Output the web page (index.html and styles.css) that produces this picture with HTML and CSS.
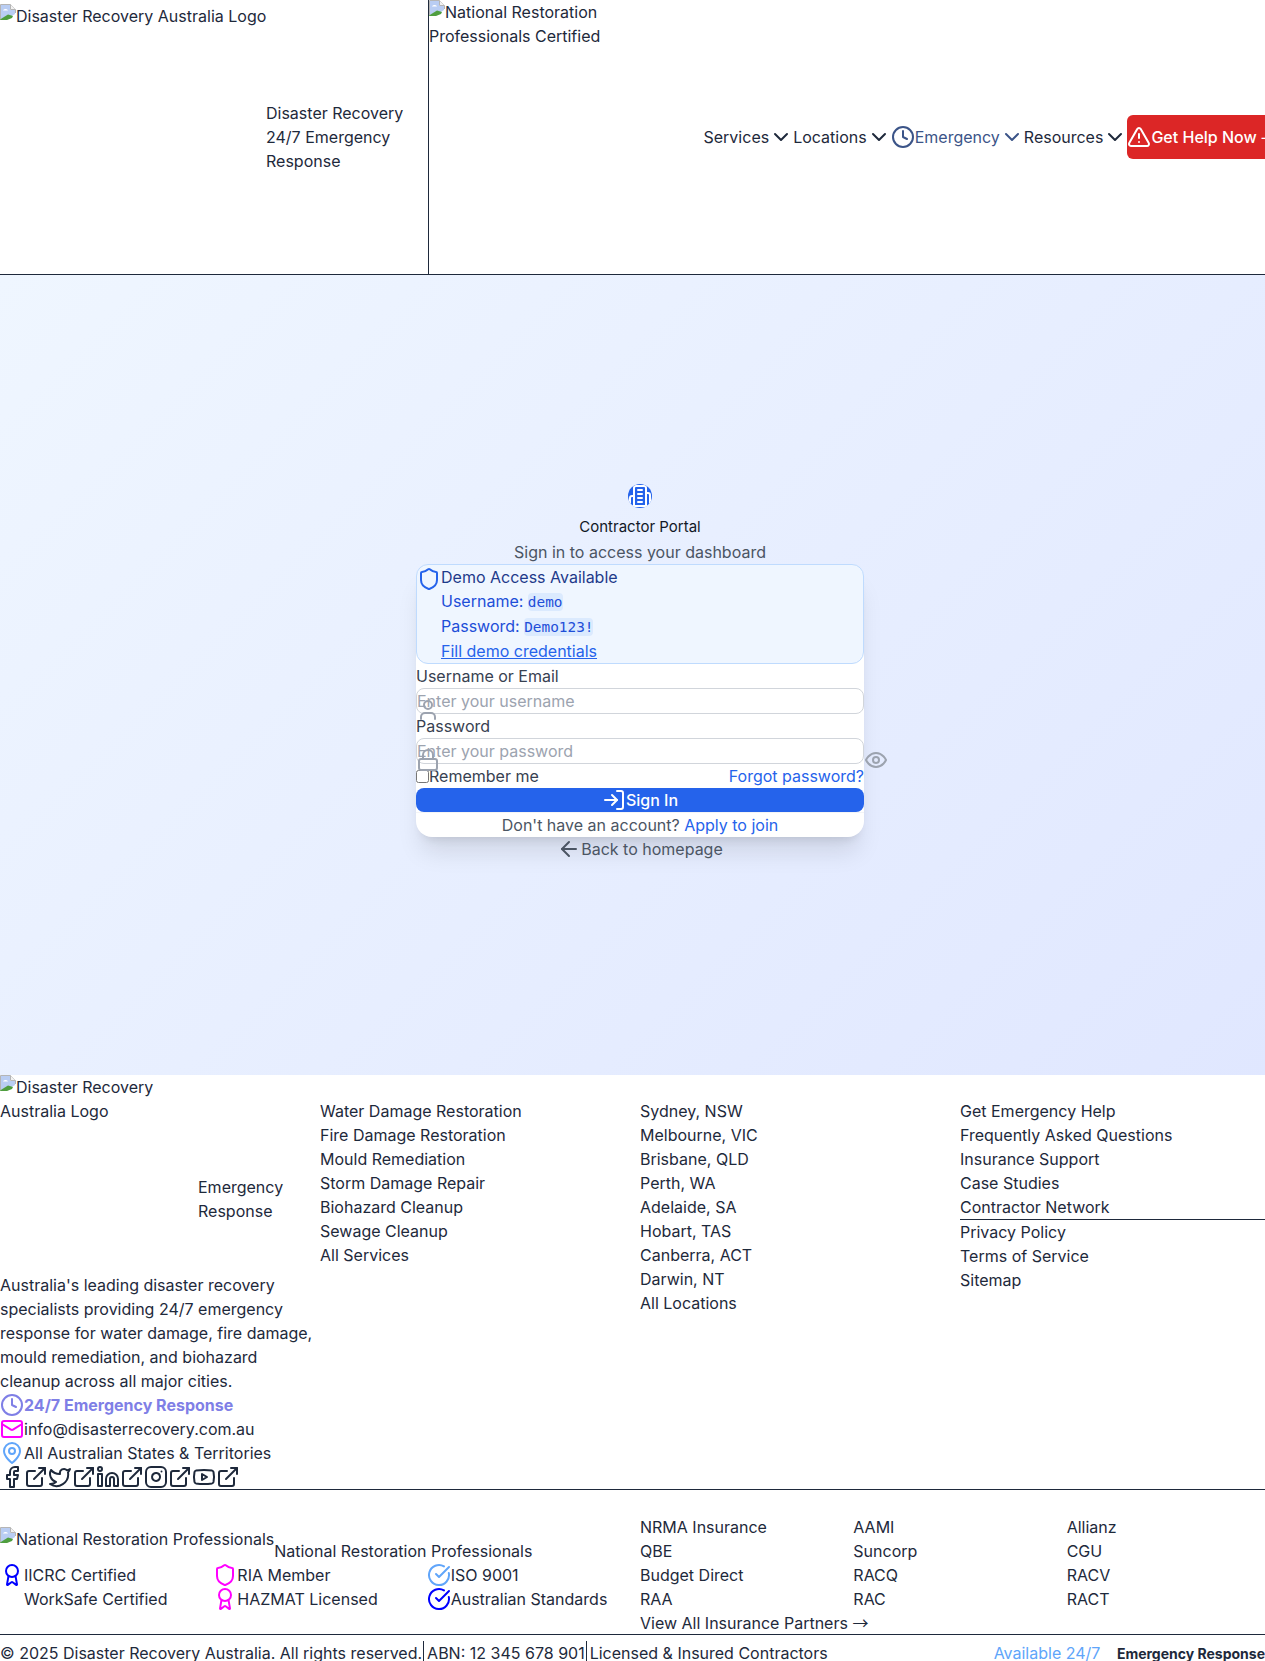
FILE: index.html
```html
<!DOCTYPE html>
<html lang="en">
<head>
    <meta charset="UTF-8">
    <meta name="viewport" content="width=device-width, initial-scale=1.0">
    <title>Contractor Portal - Disaster Recovery Australia</title>
    <link rel="stylesheet" href="styles.css">
</head>
<body>

<svg class="sprite" xmlns="http://www.w3.org/2000/svg">
    <symbol id="i-broken" viewBox="0 0 16 16">
        <path d="M0.5 15V0.5H10.5L15.5 5.5V9" fill="#fff" stroke="#b5b5b5"/>
        <path d="M10.5 0.5V5.5H15.5" fill="#f2f2f2" stroke="#b5b5b5"/>
        <path d="M1 1H10V6H15V10L11 12.5L1 15Z" fill="#b9cdf3"/>
        <path d="M3 6.5C4 4.5 7 4.5 8 6.5Z" fill="#fff"/>
        <path d="M0 15.5L8 10.5L13 12L12 14L7 16H0Z" fill="#4f9e3f"/>
    </symbol>
    <symbol id="i-chevron" viewBox="0 0 24 24"><path d="m6 9 6 6 6-6"/></symbol>
    <symbol id="i-clock" viewBox="0 0 24 24"><circle cx="12" cy="12" r="10"/><path d="M12 6v6l4 2"/></symbol>
    <symbol id="i-alert" viewBox="0 0 24 24"><path d="m21.73 18-8-14a2 2 0 0 0-3.48 0l-8 14A2 2 0 0 0 4 21h16a2 2 0 0 0 1.73-3"/><path d="M12 9v4"/><path d="M12 17h.01"/></symbol>
    <symbol id="i-shield" viewBox="0 0 24 24"><path d="M20 13c0 5-3.5 7.5-7.66 8.95a1 1 0 0 1-.67-.01C7.5 20.5 4 18 4 13V6a1 1 0 0 1 1-1c2 0 4.5-1.2 6.24-2.72a1.17 1.17 0 0 1 1.52 0C14.51 3.81 17 5 19 5a1 1 0 0 1 1 1z"/></symbol>
    <symbol id="i-user" viewBox="0 0 24 24"><path d="M19 21v-2a4 4 0 0 0-4-4H9a4 4 0 0 0-4 4v2"/><circle cx="12" cy="7" r="4"/></symbol>
    <symbol id="i-lock" viewBox="0 0 24 24"><rect x="3" y="11" width="18" height="11" rx="2"/><path d="M7 11V7a5 5 0 0 1 10 0v4"/></symbol>
    <symbol id="i-eye" viewBox="0 0 24 24"><path d="M2 12s3-7 10-7 10 7 10 7-3 7-10 7-10-7-10-7Z"/><circle cx="12" cy="12" r="3"/></symbol>
    <symbol id="i-login" viewBox="0 0 24 24"><path d="M15 3h4a2 2 0 0 1 2 2v14a2 2 0 0 1-2 2h-4"/><path d="m10 17 5-5-5-5"/><path d="M15 12H3"/></symbol>
    <symbol id="i-back" viewBox="0 0 24 24"><path d="m12 19-7-7 7-7"/><path d="M19 12H5"/></symbol>
    <symbol id="i-mail" viewBox="0 0 24 24"><rect x="2" y="4" width="20" height="16" rx="2"/><path d="m22 7-8.97 5.7a1.94 1.94 0 0 1-2.06 0L2 7"/></symbol>
    <symbol id="i-pin" viewBox="0 0 24 24"><path d="M20 10c0 6-8 12-8 12s-8-6-8-12a8 8 0 0 1 16 0Z"/><circle cx="12" cy="10" r="3"/></symbol>
    <symbol id="i-ext" viewBox="0 0 24 24"><path d="M15 3h6v6"/><path d="M10 14 21 3"/><path d="M18 13v6a2 2 0 0 1-2 2H5a2 2 0 0 1-2-2V8a2 2 0 0 1 2-2h6"/></symbol>
    <symbol id="i-facebook" viewBox="0 0 24 24"><path d="M18 2h-3a5 5 0 0 0-5 5v3H7v4h3v8h4v-8h3l1-4h-4V7a1 1 0 0 1 1-1h3z"/></symbol>
    <symbol id="i-twitter" viewBox="0 0 24 24"><path d="M22 4s-.7 2.1-2 3.4c1.6 10-9.4 17.3-18 11.6 2.2.1 4.4-.6 6-2C3 15.5.5 9.6 3 5c2.2 2.6 5.6 4.1 9 4-.9-4.2 4-6.6 7-3.8 1.1 0 3-1.2 3-1.2z"/></symbol>
    <symbol id="i-linkedin" viewBox="0 0 24 24"><path d="M16 8a6 6 0 0 1 6 6v7h-4v-7a2 2 0 0 0-2-2 2 2 0 0 0-2 2v7h-4v-7a6 6 0 0 1 6-6z"/><rect x="2" y="9" width="4" height="12"/><circle cx="4" cy="4" r="2"/></symbol>
    <symbol id="i-instagram" viewBox="0 0 24 24"><rect x="2" y="2" width="20" height="20" rx="5"/><path d="M16 11.37A4 4 0 1 1 12.63 8 4 4 0 0 1 16 11.37z"/><path d="M17.5 6.5h.01"/></symbol>
    <symbol id="i-youtube" viewBox="0 0 24 24"><path d="M2.5 17a24.12 24.12 0 0 1 0-10 2 2 0 0 1 1.4-1.4 49.56 49.56 0 0 1 16.2 0A2 2 0 0 1 21.5 7a24.12 24.12 0 0 1 0 10 2 2 0 0 1-1.4 1.4 49.55 49.55 0 0 1-16.2 0A2 2 0 0 1 2.5 17"/><path d="m10 15 5-3-5-3z"/></symbol>
    <symbol id="i-award" viewBox="0 0 24 24"><path d="m15.477 12.89 1.515 8.526a.5.5 0 0 1-.81.47l-3.58-2.687a1 1 0 0 0-1.197 0l-3.586 2.686a.5.5 0 0 1-.81-.469l1.514-8.526"/><circle cx="12" cy="8" r="6"/></symbol>
    <symbol id="i-check" viewBox="0 0 24 24"><path d="M21.801 10A10 10 0 1 1 17 3.335"/><path d="m9 11 3 3L22 4"/></symbol>
    <symbol id="i-building" viewBox="0 0 24 24"><path d="M6 22V4a2 2 0 0 1 2-2h8a2 2 0 0 1 2 2v18Z"/><path d="M6 12H4a2 2 0 0 0-2 2v6a2 2 0 0 0 2 2h2"/><path d="M18 9h2a2 2 0 0 1 2 2v9a2 2 0 0 1-2 2h-2"/><path d="M10 6h4"/><path d="M10 10h4"/><path d="M10 14h4"/><path d="M10 18h4"/></symbol>
</svg>

<header class="site-header">
    <div class="brand">
        <a class="brand-logo"><svg class="broken"><use href="#i-broken"/></svg>Disaster Recovery Australia Logo</a>
        <div class="brand-text">
            <div>Disaster Recovery</div>
            <div>24/7 Emergency Response</div>
        </div>
    </div>
    <div class="certified"><svg class="broken"><use href="#i-broken"/></svg>National Restoration Professionals Certified</div>
    <nav class="main-nav">
        <a class="nav-link">Services<svg class="icon"><use href="#i-chevron"/></svg></a>
        <a class="nav-link">Locations<svg class="icon"><use href="#i-chevron"/></svg></a>
        <a class="nav-link nav-emergency"><svg class="icon"><use href="#i-clock"/></svg>Emergency<svg class="icon"><use href="#i-chevron"/></svg></a>
        <a class="nav-link">Resources<svg class="icon"><use href="#i-chevron"/></svg></a>
        <a class="help-btn"><svg class="icon"><use href="#i-alert"/></svg>Get Help Now <span class="arrow">→</span></a>
    </nav>
</header>

<main class="login-page">
    <div class="login-wrap">
        <div class="login-head">
            <div class="portal-badge"><svg class="icon"><use href="#i-building"/></svg></div>
            <h1>Contractor Portal</h1>
            <p>Sign in to access your dashboard</p>
        </div>
        <div class="login-card">
            <div class="demo-box">
                <svg class="icon demo-icon"><use href="#i-shield"/></svg>
                <div class="demo-text">
                    <div class="demo-title">Demo Access Available</div>
                    <div>Username: <code>demo</code></div>
                    <div>Password: <code>Demo123!</code></div>
                    <a class="demo-fill">Fill demo credentials</a>
                </div>
            </div>
            <form id="loginForm">
                <label for="username">Username or Email</label>
                <div class="field">
                    <svg class="icon field-icon"><use href="#i-user"/></svg>
                    <input type="text" id="username" placeholder="Enter your username">
                </div>
                <label for="password">Password</label>
                <div class="field">
                    <svg class="icon field-icon"><use href="#i-lock"/></svg>
                    <input type="password" id="password" placeholder="Enter your password">
                    <svg class="icon field-eye"><use href="#i-eye"/></svg>
                </div>
                <div class="form-row">
                    <label class="remember"><input type="checkbox">Remember me</label>
                    <a class="link">Forgot password?</a>
                </div>
                <button type="submit" class="signin-btn"><svg class="icon"><use href="#i-login"/></svg>Sign In</button>
            </form>
            <div class="card-foot">Don't have an account? <a class="link">Apply to join</a></div>
        </div>
        <a class="back-link"><svg class="icon"><use href="#i-back"/></svg>Back to homepage</a>
    </div>
</main>

<footer class="site-footer">
    <div class="footer-grid">
        <div>
            <div class="footer-brand">
                <div class="footer-logo"><svg class="broken"><use href="#i-broken"/></svg>Disaster Recovery Australia Logo</div>
                <div class="footer-brand-text">Emergency Response</div>
            </div>
            <p>Australia's leading disaster recovery specialists providing 24/7 emergency response for water damage, fire damage, mould remediation, and biohazard cleanup across all major cities.</p>
            <div class="contact contact-strong"><svg class="icon"><use href="#i-clock"/></svg>24/7 Emergency Response</div>
            <div class="contact"><svg class="icon icon-pink"><use href="#i-mail"/></svg>info@disasterrecovery.com.au</div>
            <div class="contact"><svg class="icon icon-sky"><use href="#i-pin"/></svg>All Australian States &amp; Territories</div>
            <div class="socials">
                <svg class="icon"><use href="#i-facebook"/></svg><svg class="icon"><use href="#i-ext"/></svg>
                <svg class="icon"><use href="#i-twitter"/></svg><svg class="icon"><use href="#i-ext"/></svg>
                <svg class="icon"><use href="#i-linkedin"/></svg><svg class="icon"><use href="#i-ext"/></svg>
                <svg class="icon"><use href="#i-instagram"/></svg><svg class="icon"><use href="#i-ext"/></svg>
                <svg class="icon"><use href="#i-youtube"/></svg><svg class="icon"><use href="#i-ext"/></svg>
            </div>
        </div>
        <ul class="footer-list">
            <li>Water Damage Restoration</li>
            <li>Fire Damage Restoration</li>
            <li>Mould Remediation</li>
            <li>Storm Damage Repair</li>
            <li>Biohazard Cleanup</li>
            <li>Sewage Cleanup</li>
            <li>All Services</li>
        </ul>
        <ul class="footer-list">
            <li>Sydney, NSW</li>
            <li>Melbourne, VIC</li>
            <li>Brisbane, QLD</li>
            <li>Perth, WA</li>
            <li>Adelaide, SA</li>
            <li>Hobart, TAS</li>
            <li>Canberra, ACT</li>
            <li>Darwin, NT</li>
            <li>All Locations</li>
        </ul>
        <div class="footer-list">
            <ul class="support-list">
                <li>Get Emergency Help</li>
                <li>Frequently Asked Questions</li>
                <li>Insurance Support</li>
                <li>Case Studies</li>
                <li>Contractor Network</li>
            </ul>
            <ul>
                <li>Privacy Policy</li>
                <li>Terms of Service</li>
                <li>Sitemap</li>
            </ul>
        </div>
    </div>

    <div class="partners">
        <div class="partners-left">
            <div class="nrp">
                <div class="nrp-logo"><svg class="broken"><use href="#i-broken"/></svg>National Restoration Professionals</div>
                <div>National Restoration Professionals</div>
            </div>
            <div class="three-col">
                <div class="cert"><svg class="icon icon-blue"><use href="#i-award"/></svg>IICRC Certified</div>
                <div class="cert"><svg class="icon icon-pink"><use href="#i-shield"/></svg>RIA Member</div>
                <div class="cert"><svg class="icon icon-sky"><use href="#i-check"/></svg>ISO 9001</div>
                <div class="cert"><svg class="icon icon-white"><use href="#i-shield"/></svg>WorkSafe Certified</div>
                <div class="cert"><svg class="icon icon-pink"><use href="#i-award"/></svg>HAZMAT Licensed</div>
                <div class="cert"><svg class="icon icon-blue"><use href="#i-check"/></svg>Australian Standards</div>
            </div>
        </div>
        <div>
            <div class="three-col">
                <div>NRMA Insurance</div><div>AAMI</div><div>Allianz</div>
                <div>QBE</div><div>Suncorp</div><div>CGU</div>
                <div>Budget Direct</div><div>RACQ</div><div>RACV</div>
                <div>RAA</div><div>RAC</div><div>RACT</div>
            </div>
            <div>View All Insurance Partners <span class="arrow">→</span></div>
        </div>
    </div>

    <div class="legal">
        <div class="legal-left">
            <span>© 2025 Disaster Recovery Australia. All rights reserved.</span>
            <span class="legal-item">ABN: 12 345 678 901</span>
            <span class="legal-item">Licensed &amp; Insured Contractors</span>
        </div>
        <div class="legal-right">
            <span class="available">Available 24/7</span>
            <strong>Emergency Response</strong>
        </div>
    </div>
</footer>

</body>
</html>
```

FILE: styles.css
```css
* {
    box-sizing: border-box;
}
html {
    height: 1661px;
    overflow: hidden;
}
body {
    margin: 0;
    padding: 0;
    width: 1280px;
    font-family: Inter, "Liberation Sans", sans-serif;
    font-size: 16px;
    line-height: 24px;
    color: #1e293b;
    background-color: #fff;
}
ul {
    list-style: none;
    margin: 0;
    padding: 0;
}
p {
    margin: 0;
}
.sprite {
    display: none;
}
.icon {
    width: 24px;
    height: 24px;
    flex: none;
    fill: none;
    stroke: currentColor;
    stroke-width: 2;
    stroke-linecap: round;
    stroke-linejoin: round;
}
.broken {
    width: 16px;
    height: 16px;
    vertical-align: top;
}
.arrow {
    font-family: "Noto Sans CJK SC", sans-serif;
    line-height: 1;
}
.icon-pink { color: #ff00ff; }
.icon-sky { color: #60a5fa; }
.icon-blue { color: #0000ff; }
.icon-white { color: #fff; }

/* header */
.site-header {
    display: flex;
    align-items: center;
    height: 275px;
    border-bottom: 1px solid #1e293b;
}
.brand {
    display: flex;
    align-items: center;
    width: 429px;
    height: 274px;
    border-right: 1px solid #1e293b;
    flex: none;
}
.brand-logo {
    align-self: flex-start;
    margin-top: 4px;
    width: 266px;
    flex: none;
    white-space: nowrap;
}
.brand-text {
    width: 140px;
}
.certified {
    align-self: flex-start;
    width: 175px;
    flex: none;
}
.main-nav {
    display: flex;
    align-items: center;
    margin-left: 99.5px;
    flex: none;
}
.nav-link {
    display: flex;
    align-items: center;
}
.nav-emergency {
    color: #3b5488;
}
.help-btn {
    display: flex;
    align-items: center;
    height: 44px;
    background-color: #dc2626;
    color: #fff;
    border-radius: 6px;
    font-weight: 500;
    white-space: pre;
}

/* login */
.login-page {
    display: flex;
    align-items: center;
    justify-content: center;
    height: 800px;
    padding-bottom: 5px;
    background: linear-gradient(135deg, #eff6ff, #e0e7ff);
}
.login-wrap {
    width: 448px;
}
.login-head {
    text-align: center;
}
.portal-badge {
    display: flex;
    align-items: center;
    justify-content: center;
    width: 24px;
    height: 24px;
    margin: 0 auto 7px;
    border-radius: 50%;
    background-color: #2563eb;
    color: #fff;
    overflow: hidden;
}
.login-head h1 {
    margin: 0 0 1px;
    font-size: 15px;
    font-weight: 400;
    color: #111827;
}
.login-head p {
    color: #4b5563;
}
.login-card {
    background-color: #fff;
    border-radius: 16px;
    box-shadow: 0 20px 25px -5px rgba(0, 0, 0, 0.1), 0 8px 10px -6px rgba(0, 0, 0, 0.1);
}
.demo-box {
    display: flex;
    height: 100px;
    background-color: #eff6ff;
    border: 1px solid #bfdbfe;
    border-radius: 12px;
}
.demo-icon {
    color: #2563eb;
    margin-top: 2px;
}
.demo-text {
    color: #1d4ed8;
}
.demo-title {
    color: #1e3a8a;
}
.demo-text code {
    font-family: "DejaVu Sans Mono", monospace;
    font-size: 14.4px;
    padding: 1px 0;
    background-color: #dbeafe;
    border-radius: 4px;
}
.demo-fill {
    display: block;
    color: #2563eb;
    text-decoration: underline;
}
#loginForm label {
    display: block;
    color: #374151;
}
.field {
    position: relative;
}
.field input {
    display: block;
    width: 100%;
    height: 26px;
    padding: 0;
    font: inherit;
    background: transparent;
    border: 1px solid #d1d5db;
    border-radius: 8px;
}
.field input::placeholder {
    color: #9ca3af;
}
.field-icon {
    position: absolute;
    left: 0;
    top: 10px;
    color: #9ca3af;
}
.field-eye {
    position: absolute;
    left: 100%;
    top: 10px;
    color: #9ca3af;
}
.form-row {
    display: flex;
    justify-content: space-between;
    align-items: center;
}
#loginForm .remember {
    display: flex;
    align-items: center;
}
.remember input {
    width: 13px;
    height: 13px;
    margin: 0;
}
.link {
    color: #2563eb;
}
.signin-btn {
    display: flex;
    align-items: center;
    justify-content: center;
    width: 100%;
    height: 24px;
    padding: 0;
    font: inherit;
    font-weight: 500;
    color: #fff;
    background-color: #2563eb;
    border: none;
    border-radius: 8px;
}
.card-foot {
    text-align: center;
    color: #4b5563;
    border-top: 1px solid #f3f4f6;
}
.back-link {
    display: flex;
    align-items: center;
    justify-content: center;
    color: #4b5563;
}

/* footer */
.footer-grid {
    display: grid;
    grid-template-columns: repeat(4, 1fr);
    height: 415px;
    border-bottom: 1px solid #1e293b;
}
.footer-brand {
    display: flex;
    align-items: flex-end;
    height: 148px;
    margin-bottom: 50px;
}
.footer-logo {
    align-self: flex-start;
    width: 198px;
    flex: none;
}
.footer-brand-text {
    width: 90px;
}
.contact {
    display: flex;
    align-items: center;
}
.contact-strong {
    color: #7f7fe6;
    font-weight: 700;
}
.socials {
    display: flex;
}
.footer-list {
    padding-top: 24px;
}
.support-list {
    border-bottom: 1px solid #1e293b;
}
.partners {
    display: grid;
    grid-template-columns: 1fr 1fr;
    height: 145px;
    padding-top: 25px;
    border-bottom: 1px solid #1e293b;
}
.partners-left {
    padding-top: 12px;
}
.nrp {
    display: flex;
    align-items: flex-end;
    height: 36px;
}
.nrp-logo {
    align-self: flex-start;
    white-space: nowrap;
}
.three-col {
    display: grid;
    grid-template-columns: repeat(3, 1fr);
}
.cert {
    display: flex;
    align-items: center;
}
.legal {
    display: flex;
    justify-content: space-between;
    width: 1265px;
    padding-top: 6px;
}
.legal-left {
    display: flex;
}
.legal-item {
    border-left: 1px solid #1e293b;
    margin-left: 1px;
    padding-left: 3px;
}
.available {
    color: #60a5fa;
    margin-right: 12px;
}
.legal-right strong {
    font-size: 14px;
}
```
